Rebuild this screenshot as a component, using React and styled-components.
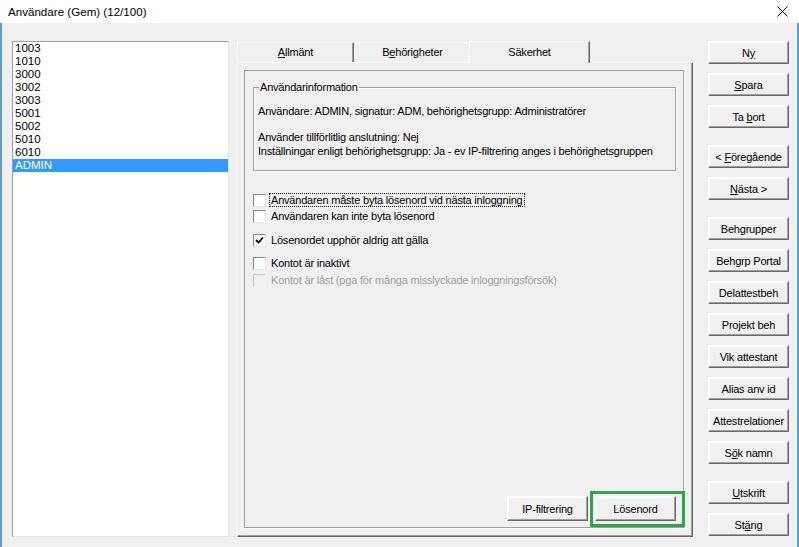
import React from "react";
import { styled, createGlobalStyle } from "styled-components";

const GlobalStyle = createGlobalStyle`
  html, body {
    margin: 0;
    padding: 0;
    background: #f0f0f0;
    font-family: "Liberation Sans", Arial, sans-serif;
    font-size: 11px;
    color: #000;
  }
`;

const Window = styled.div`
  width: 799px;
  height: 547px;
  display: flex;
  flex-direction: column;
  overflow: hidden;
  background: #f0f0f0;
`;

const TitleBar = styled.div`
  height: 23px;
  flex: none;
  background: #fff;
  display: flex;
  align-items: center;
  justify-content: space-between;
  padding: 0 11px 0 8px;
  font-size: 11.6px;
`;

const Body = styled.div`
  flex: 1;
  display: flex;
  align-items: flex-start;
  padding: 18px 8px 0 10px;
  border-left: 2px solid #5f9bd6;
  border-right: 2px solid #5f9bd6;
`;

const ListBox = styled.div`
  width: 215px;
  height: 494px;
  flex: none;
  background: #fff;
  border: 1px solid;
  border-color: #a0a0a0 #e3e3e3 #e3e3e3 #a0a0a0;
  font-size: 11.5px;
`;

const ListItem = styled.div`
  height: 13px;
  line-height: 13px;
  padding-left: 2px;
  background: ${(p) => (p.$selected ? "#3399ff" : "transparent")};
  color: ${(p) => (p.$selected ? "#fff" : "#000")};
`;

const TabArea = styled.div`
  width: 456px;
  height: 497px;
  margin: -1px 0 0 8px;
  display: flex;
  flex-direction: column;
  flex: none;
`;

const TabStrip = styled.div`
  height: 22px;
  display: flex;
  align-items: flex-end;
  position: relative;
  z-index: 1;
`;

const Tab = styled.div`
  width: ${(p) => (p.$active ? "121px" : "117px")};
  height: ${(p) => (p.$active ? "22px" : "20px")};
  margin: ${(p) => (p.$active ? "0 -2px -1px -2px" : "0")};
  box-sizing: border-box;
  background: #f0f0f0;
  border-top: 1px solid #fff;
  border-left: 1px solid #fff;
  border-right: 1px solid #696969;
  box-shadow: inset -1px 0 0 #a0a0a0;
  display: flex;
  align-items: center;
  justify-content: center;
  font-size: 11px;
  letter-spacing: -0.2px;
  padding-bottom: 1px;
`;

const Panel = styled.div`
  flex: 1;
  display: flex;
  padding: 7px 8px 8px 6px;
  border: 1px solid;
  border-color: #fff #696969 #696969 #fff;
  box-shadow: inset -1px -1px 0 #a0a0a0;
`;

const Frame = styled.div`
  flex: 1;
  display: flex;
  flex-direction: column;
  border: 1px solid #a0a0a0;
  box-shadow: 1px 1px 0 #fff;
  padding: 10px 6px 6px 8px;
`;

const GroupBox = styled.fieldset`
  margin: 0 1px 0 0;
  padding: 10px 4px 12px 4px;
  border: 1px solid #a0a0a0;
  box-shadow: 1px 1px 0 #fff, inset 1px 1px 0 #fff;
  min-inline-size: 0;
`;

const Legend = styled.legend`
  padding: 0 1px;
  margin-left: 1px;
  font-size: 11px;
  letter-spacing: -0.2px;
  line-height: 13px;
`;

const InfoLine = styled.div`
  font-size: 11px;
  letter-spacing: -0.2px;
  line-height: 14px;
  white-space: nowrap;
  margin-top: ${(p) => (p.$gap ? "12px" : "0")};
`;

const Checks = styled.div`
  display: flex;
  flex-direction: column;
  margin-top: 21px;
`;

const CheckRow = styled.div`
  height: 16px;
  display: flex;
  align-items: center;
  gap: 3px;
  margin-top: ${(p) => p.$gap || 0}px;
  color: ${(p) => (p.$disabled ? "#a0a0a0" : "#000")};
  font-size: 11px;
  letter-spacing: -0.2px;
  white-space: nowrap;
`;

const Box = styled.span`
  width: 13px;
  height: 13px;
  box-sizing: border-box;
  flex: none;
  display: flex;
  align-items: center;
  justify-content: center;
  background: ${(p) => (p.$disabled ? "#f0f0f0" : "#fff")};
  border: 1px solid;
  border-color: ${(p) =>
    p.$disabled ? "#c8c8c8 #f4f4f4 #f4f4f4 #c8c8c8" : "#8a8a8a #e8e8e8 #e8e8e8 #8a8a8a"};
`;

const Label = styled.span`
  padding: 0 1px;
  border: 1px dotted ${(p) => (p.$focus ? "#000" : "transparent")};
`;

const ButtonRow = styled.div`
  margin-top: auto;
  display: flex;
  justify-content: flex-end;
  gap: 7px;
  padding-right: 1px;
`;

const Button = styled.button`
  width: ${(p) => p.$w || 81}px;
  height: ${(p) => p.$h || 23}px;
  padding: 0;
  box-sizing: border-box;
  background: #f0f0f0;
  border: 1px solid;
  border-color: #fff #696969 #696969 #fff;
  box-shadow: inset -1px -1px 0 #a0a0a0, inset 1px 1px 0 #fdfdfd;
  font-family: "Liberation Sans", Arial, sans-serif;
  font-size: 11px;
  letter-spacing: -0.2px;
  white-space: nowrap;
  color: #000;
  display: flex;
  align-items: center;
  justify-content: center;
  flex: none;
`;

const Highlight = styled.span`
  position: relative;
  display: flex;
  &::after {
    content: "";
    position: absolute;
    left: -5px;
    right: -9px;
    top: -5px;
    bottom: -6px;
    border: 3px solid #2ea64a;
    pointer-events: none;
  }
`;

const SideColumn = styled.div`
  width: 81px;
  margin-left: 15px;
  display: flex;
  flex-direction: column;
  flex: none;
`;

const SideGroup = styled.div`
  display: flex;
  flex-direction: column;
  gap: 9px;
  margin-top: ${(p) => (p.$first ? 0 : 17)}px;
`;

const users = ["1003", "1010", "3000", "3002", "3003", "5001", "5002", "5010", "6010", "ADMIN"];

const Check = ({ checked }) => (
  <svg width="9" height="9" viewBox="0 0 9 9">
    {checked && <polyline points="1,4 3.5,6.5 8,1.5" fill="none" stroke="#000" strokeWidth="1.8" />}
  </svg>
);

const CheckItem = ({ checked, disabled, focus, gap, children }) => (
  <CheckRow $disabled={disabled} $gap={gap}>
    <Box $disabled={disabled}>
      <Check checked={checked} />
    </Box>
    <Label $focus={focus}>{children}</Label>
  </CheckRow>
);

export default function App() {
  return (
    <>
      <GlobalStyle />
      <Window>
        <TitleBar>
          <span>Användare (Gem) (12/100)</span>
          <svg width="11" height="11" viewBox="0 0 11 11">
            <path d="M0.5 0.5 L10.5 10.5 M10.5 0.5 L0.5 10.5" stroke="#000" strokeWidth="1" />
          </svg>
        </TitleBar>
        <Body>
          <ListBox>
            {users.map((u) => (
              <ListItem key={u} $selected={u === "ADMIN"}>
                {u}
              </ListItem>
            ))}
          </ListBox>

          <TabArea>
            <TabStrip>
              <Tab>
                <span>
                  <u>A</u>llmänt
                </span>
              </Tab>
              <Tab>
                <span>
                  B<u>e</u>hörigheter
                </span>
              </Tab>
              <Tab $active>Säkerhet</Tab>
            </TabStrip>
            <Panel>
              <Frame>
                <GroupBox>
                  <Legend>Användarinformation</Legend>
                  <InfoLine>Användare: ADMIN, signatur: ADM, behörighetsgrupp: Administratörer</InfoLine>
                  <InfoLine $gap>Använder tillförlitlig anslutning: Nej</InfoLine>
                  <InfoLine>Inställningar enligt behörighetsgrupp: Ja - ev IP-filtrering anges i behörighetsgruppen</InfoLine>
                </GroupBox>

                <Checks>
                  <CheckItem focus>Användaren måste byta lösenord vid nästa inloggning</CheckItem>
                  <CheckItem>Användaren kan inte byta lösenord</CheckItem>
                  <CheckItem checked gap={8}>
                    Lösenordet upphör aldrig att gälla
                  </CheckItem>
                  <CheckItem gap={7}>Kontot är inaktivt</CheckItem>
                  <CheckItem disabled gap={1}>
                    Kontot är låst (pga för många misslyckade inloggningsförsök)
                  </CheckItem>
                </Checks>

                <ButtonRow>
                  <Button $w={81} $h={25}>IP-filtrering</Button>
                  <Highlight>
                    <Button $w={81} $h={25}>Lösenord</Button>
                  </Highlight>
                </ButtonRow>
              </Frame>
            </Panel>
          </TabArea>

          <SideColumn>
            <SideGroup $first>
              <Button>
                <span>
                  N<u>y</u>
                </span>
              </Button>
              <Button>
                <span>
                  <u>S</u>para
                </span>
              </Button>
              <Button>
                <span>
                  Ta <u>b</u>ort
                </span>
              </Button>
            </SideGroup>
            <SideGroup>
              <Button>
                <span>
                  &lt; <u>F</u>öregående
                </span>
              </Button>
              <Button>
                <span>
                  <u>N</u>ästa &gt;
                </span>
              </Button>
            </SideGroup>
            <SideGroup>
              <Button>Behgrupper</Button>
              <Button>Behgrp Portal</Button>
              <Button>Delattestbeh</Button>
              <Button>Projekt beh</Button>
              <Button>Vik attestant</Button>
              <Button>Alias anv id</Button>
              <Button>Attestrelationer</Button>
              <Button>
                <span>
                  S<u>ö</u>k namn
                </span>
              </Button>
            </SideGroup>
            <SideGroup>
              <Button>
                <span>
                  <u>U</u>tskrift
                </span>
              </Button>
              <Button>
                <span>
                  St<u>ä</u>ng
                </span>
              </Button>
            </SideGroup>
          </SideColumn>
        </Body>
      </Window>
    </>
  );
}
